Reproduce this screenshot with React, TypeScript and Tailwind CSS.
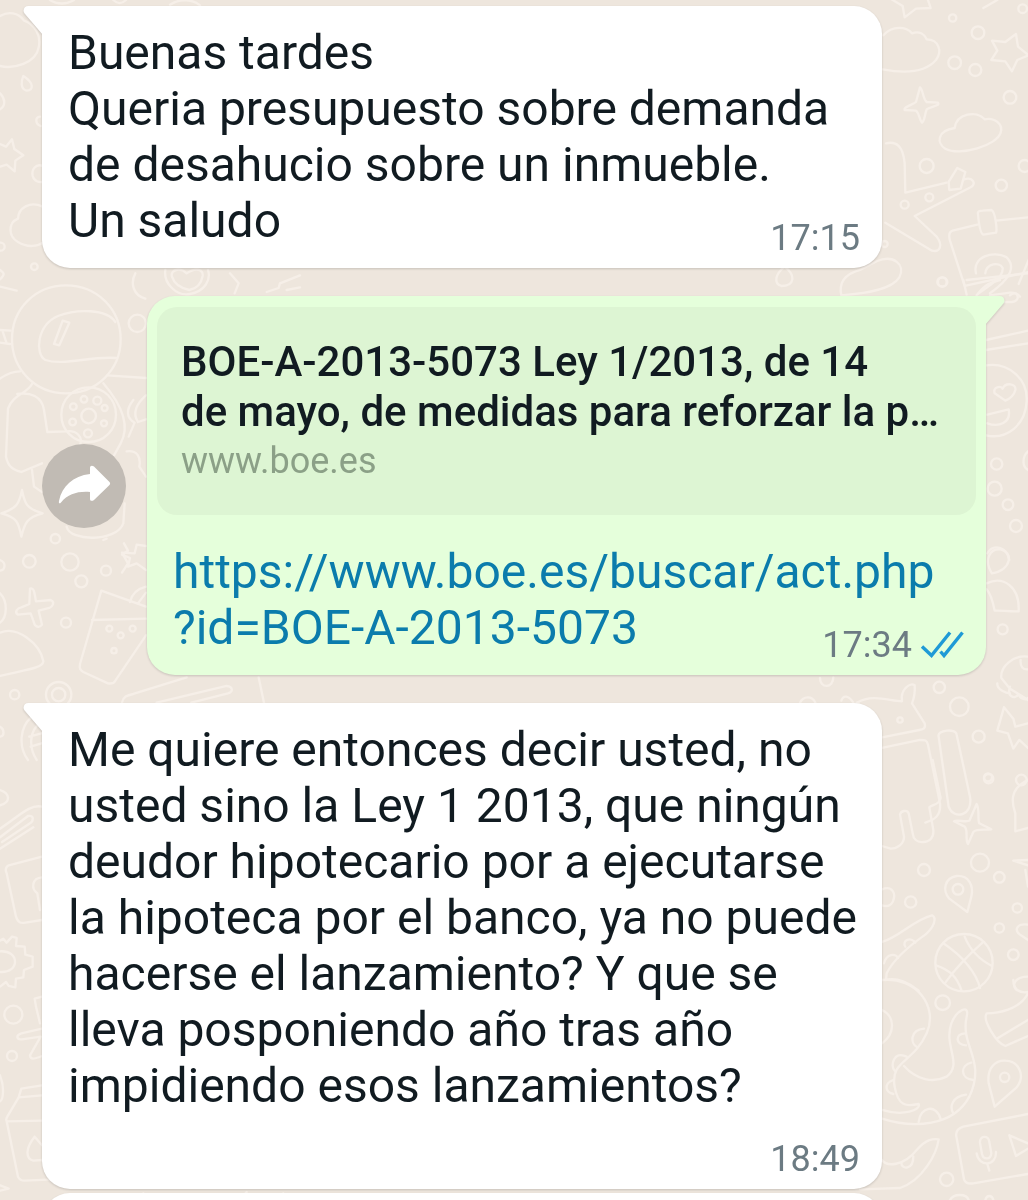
import React from 'react';

interface Dot {
	x: number;
	y: number;
	r: number;
}

interface DoodlePatch {
	x: number;
	y: number;
	paths: string[];
	dots: Dot[];
}

// Line art of the chat wallpaper, grouped in patches drawn at three times their size
const wallpaper: DoodlePatch[] = [
	{
		x: 0,
		y: 0,
		paths: [
			'M0 48C25 33 55 38 72 62C105 72 124 108 116 142C108 190 40 208 0 198',
			'M70 228C62 245 62 268 80 272C100 270 104 250 70 228Z',
			'M0 280C16 296 18 318 0 328',
			'M0 432L18 440L36 418L43 447L70 466L46 482L44 514L20 494L0 500',
			'M128 620C90 602 55 624 54 656C24 668 24 710 54 726C84 745 115 738 128 728',
			'M150 0C170 14 200 14 222 0M340 0C352 12 366 12 378 0M510 14C540 -6 580 -2 600 16',
			'M128 498C108 490 94 508 98 528C102 544 118 548 128 546M120 350C104 352 106 372 122 378',
		],
		dots: [
			{ x: 103, y: 800, r: 10 },
			{ x: 2, y: 740, r: 12 },
		],
	},
	{
		x: 760,
		y: 0,
		paths: [
			'M385 -8L428 18L434 52L468 26L512 24L500 -12M670 24L712 0',
			'M370 106C398 74 440 80 456 100C480 92 494 104 500 118C536 118 548 154 528 180C490 224 420 218 368 208',
			'M696 122L736 126L768 102L774 140L806 166L772 180L756 214L736 184L694 180L712 152Z',
			'M480 262C490 270 488 296 500 306L534 308C542 318 510 320 500 328C494 344 494 364 486 368C478 360 478 340 468 332L434 330C430 320 460 314 468 306Z',
			'M584 384C590 340 650 330 674 358C706 352 730 374 722 398C712 436 600 470 556 446C530 430 530 392 584 384Z',
			'M378 430C410 422 430 440 434 490L436 578L560 548M612 538C640 530 650 552 632 562L464 648L530 710C550 736 540 758 516 752L376 668',
			'M566 546L592 504L616 516L602 566L568 570Z',
			'M652 674L578 692C566 696 566 708 570 722L614 858L806 816M708 662L806 652M654 642C652 634 660 632 668 632L694 630C706 634 712 690 708 698L670 704C660 700 656 666 654 642Z',
			'M648 820C636 770 700 750 740 772C768 800 752 836 690 880M676 820C680 790 718 784 728 804C730 830 700 850 656 880',
			'M244 886C236 850 250 824 300 810L350 784C400 762 438 794 418 832C396 868 320 880 244 886Z',
			'M74 800C46 822 40 850 64 858C104 858 108 826 74 800ZM806 780L776 852M750 886C760 876 774 880 780 890',
		],
		dots: [
			{ x: 578, y: 54, r: 11 },
			{ x: 654, y: 98, r: 19 },
			{ x: 584, y: 188, r: 19 },
			{ x: 646, y: 210, r: 18 },
			{ x: 750, y: 292, r: 19 },
			{ x: 788, y: 26, r: 13 },
			{ x: 500, y: 498, r: 21 },
			{ x: 508, y: 592, r: 12 },
			{ x: 434, y: 614, r: 12 },
			{ x: 724, y: 556, r: 17 },
			{ x: 794, y: 498, r: 18 },
			{ x: 546, y: 846, r: 14 },
			{ x: 374, y: 732, r: 9 },
		],
	},
	{
		x: 0,
		y: 270,
		paths: [
			'M362 208C362 300 290 370 198 370C106 370 36 298 36 208C36 116 106 46 198 46C290 46 362 116 362 208Z',
			'M346 156C320 116 230 116 174 138C110 166 104 252 136 270C190 288 270 258 348 264',
			'M188 152L208 158L178 226L162 222Z',
			'M0 50L50 62M0 28C20 10 8 6 0 0M0 180L32 182M0 218L30 222M8 184L20 220',
			'M0 326C28 306 50 304 60 304M96 342C80 372 40 372 24 416L18 560C24 590 40 600 64 606L126 580M52 372C90 366 126 378 132 420L142 486L200 484C230 480 250 502 240 524',
			'M322 316L438 324M310 340C370 410 390 470 362 520L340 560M400 390C376 420 380 444 404 458L386 500M438 376C410 400 396 430 414 456L438 448',
			'M348 434C348 480 312 516 266 516C220 516 184 480 184 434C184 388 220 352 266 352C312 352 348 388 348 434Z',
			'M380 544C410 540 424 560 418 590L438 620M96 600L102 650L126 666M200 770C210 816 350 816 370 760L374 700',
			'M66 660C74 700 78 716 128 730C80 742 74 760 64 800C56 756 50 742 4 730C50 716 58 700 66 660Z',
			'M406 10C390 40 400 76 436 86M496 0C490 40 530 80 570 72C614 64 634 30 624 0M516 20C510 0 540 -10 560 10C590 -10 610 0 608 18C604 40 590 56 568 60C540 54 522 40 516 20ZM690 10L716 40L704 70M800 66L836 54L840 40L900 16M860 60L900 52',
			'M438 828L410 824L404 850L366 848L384 880L366 908',
		],
		dots: [
			{ x: 266, y: 438, r: 22 },
			{ x: 252, y: 388, r: 10 },
			{ x: 292, y: 392, r: 12 },
			{ x: 220, y: 410, r: 10 },
			{ x: 218, y: 456, r: 10 },
			{ x: 312, y: 460, r: 9 },
			{ x: 314, y: 414, r: 9 },
			{ x: 264, y: 490, r: 12 },
			{ x: 412, y: 160, r: 26 },
			{ x: 166, y: 806, r: 14 },
			{ x: 88, y: 874, r: 19 },
			{ x: 210, y: 876, r: 26 },
		],
	},
	{
		x: 0,
		y: 540,
		paths: [
			'M0 160C24 184 22 232 0 248M0 60C20 68 16 90 0 92',
			'M90 146C104 140 104 166 108 184L152 180C166 186 158 200 148 204L116 212L126 254C118 266 104 260 102 248L92 220L54 224C42 216 52 204 64 202L88 192Z',
			'M0 278C50 256 120 310 130 364C128 386 70 390 0 408',
			'M304 152L438 200M304 152L240 372C238 386 240 390 250 396L324 430C336 432 342 430 346 422L438 286M276 240L438 236M390 186C396 160 414 146 438 140M414 190L438 158',
			'M372 10L384 32L366 44L390 54L384 80L410 70L438 90M310 0L320 -4M366 488C370 470 380 466 400 462L560 412M470 488L680 438C700 440 700 456 684 460L574 488M776 412L792 488',
			'M94 532C60 560 54 620 84 660M120 550C90 570 84 620 110 660M88 590L124 580M92 620L124 610M0 560C14 568 14 588 0 590',
		],
		dots: [
			{ x: 244, y: 124, r: 18 },
			{ x: 318, y: 92, r: 15 },
			{ x: 198, y: 248, r: 15 },
			{ x: 328, y: 266, r: 9 },
			{ x: 398, y: 266, r: 9 },
			{ x: 362, y: 286, r: 9 },
			{ x: 342, y: 332, r: 8 },
			{ x: 44, y: 464, r: 14 },
			{ x: 176, y: 464, r: 38 },
			{ x: 176, y: 464, r: 20 },
		],
	},
	{
		x: 780,
		y: 540,
		paths: [
			'M636 100C610 60 630 24 662 28C700 36 696 90 636 100ZM620 130C670 106 720 140 716 214C690 216 660 210 644 212C638 180 630 160 620 148',
			'M230 488C280 460 330 484 366 484C360 450 390 426 404 436C406 460 400 480 396 490L434 550C438 566 430 568 418 570L306 592',
			'M306 624L420 600C436 600 440 600 444 614L480 790C484 830 460 840 436 848',
			'M476 590C470 570 528 564 530 584L570 770C580 830 520 840 506 800L476 590',
			'M744 350C700 344 660 380 664 414L690 446L744 480M652 430C650 450 680 460 690 460M690 440C680 470 704 480 716 462C720 480 740 480 744 474M722 360C720 380 730 390 744 388',
			'M672 502L652 572L684 580L700 626L718 600L744 624M672 502L700 536L706 560L744 550',
			'M120 414C120 446 160 446 160 412M184 482C190 464 206 466 220 488M60 488C70 468 96 466 106 488',
		],
		dots: [
			{ x: 668, y: 268, r: 15 },
			{ x: 478, y: 442, r: 17 },
			{ x: 538, y: 500, r: 28 },
			{ x: 596, y: 590, r: 18 },
			{ x: 360, y: 540, r: 8 },
			{ x: 624, y: 712, r: 12 },
		],
	},
	{
		x: 860,
		y: 760,
		paths: [
			'M218 0L242 114C240 134 216 134 208 142L220 210C222 236 206 246 190 246C170 248 160 236 158 220L146 160C142 148 122 152 120 164L132 230C132 252 112 266 92 266L66 258',
			'M350 132C360 150 352 180 358 190L394 208C370 210 346 206 340 216L324 252C314 236 326 212 314 200L282 184C290 178 320 188 328 182Z',
			'M322 456L268 416C246 390 254 354 290 348C326 346 342 376 334 410Z',
			'M66 388C96 376 110 400 98 426C90 440 78 440 66 436M66 546C120 530 160 480 216 466C232 474 222 502 196 524C150 556 100 600 80 640L78 660C110 650 150 670 176 692',
			'M136 560C124 540 154 530 166 548M72 610C80 580 106 580 114 594',
			'M398 608C398 656 360 694 312 694C264 694 226 656 226 608C226 560 264 522 312 522C360 522 398 560 398 608Z',
			'M250 550C310 590 350 640 360 684M314 530C330 570 360 600 396 618M228 616C270 630 290 650 304 690M370 546C320 590 276 640 256 668',
			'M504 60C440 90 460 140 466 160L466 214L504 204M504 316L460 302L504 300M496 330L504 380M504 494C470 490 462 510 480 524L504 540M504 650C460 650 456 680 470 690',
		],
		dots: [
			{ x: 386, y: 56, r: 14 },
			{ x: 484, y: 60, r: 16 },
			{ x: 360, y: 308, r: 27 },
			{ x: 192, y: 330, r: 18 },
			{ x: 418, y: 352, r: 16 },
			{ x: 294, y: 388, r: 16 },
			{ x: 152, y: 426, r: 17 },
			{ x: 472, y: 444, r: 14 },
			{ x: 418, y: 504, r: 14 },
			{ x: 460, y: 584, r: 16 },
		],
	},
	{
		x: 860,
		y: 980,
		paths: [
			'M66 0C170 -10 236 80 200 160C160 250 90 240 104 320C114 380 140 380 176 372C184 390 130 410 66 390',
			'M132 258C170 300 220 310 260 290C310 250 250 200 274 130C290 90 330 70 320 110C300 200 380 240 328 350C280 440 160 446 66 416',
			'M66 90C106 110 106 160 66 190M192 146C150 150 150 190 172 202M140 230C100 210 90 260 104 272M316 160C284 160 286 196 318 196M334 248C300 256 300 296 340 300M318 344C276 350 268 380 280 400M242 418C230 370 180 380 176 426M100 300C72 310 74 336 100 342',
			'M504 40C480 90 410 100 380 100C366 120 410 190 436 198L504 168M410 176L504 120M460 0C460 30 480 40 504 36',
			'M404 380L386 310C380 260 410 240 436 242C480 244 496 290 470 322Z',
			'M504 402L310 440C290 446 286 460 290 474L312 598C316 610 326 612 340 610L504 582',
			'M360 488C358 466 386 464 388 486L394 520C392 540 370 540 366 522ZM350 520C356 562 410 560 408 516M382 552L388 572M448 466L504 490M448 466L468 528L504 506',
			'M66 540C80 560 130 560 170 510C200 476 220 476 236 478C230 520 190 600 120 624L0 628M124 548C124 570 160 570 160 530M270 660C280 640 320 640 326 660M376 660C380 644 396 644 400 660',
		],
		dots: [
			{ x: 248, y: 68, r: 22 },
			{ x: 434, y: 292, r: 14 },
			{ x: 260, y: 598, r: 20 },
		],
	},
	{
		x: 0,
		y: 1060,
		paths: [
			'M0 46C14 80 10 120 0 124M126 76L64 86L56 112L126 106M56 112L22 170C18 176 18 180 20 184L54 350C58 358 66 362 74 362L160 358M20 184L126 182M104 230C76 264 76 296 100 302L126 300M104 230L126 256M0 376L26 386L0 392M720 420L740 396M410 420L430 400L450 420M840 420L850 400',
		],
		dots: [],
	},
	{
		x: 0,
		y: 740,
		paths: [
			'M0 266C60 226 90 192 126 200M0 292L84 228C104 224 100 244 90 250L6 306M0 326L100 262M0 150C30 160 34 186 0 196',
			'M126 350L26 376C16 382 16 392 20 400L48 530C54 548 62 550 76 548L126 540M126 412C96 414 92 446 112 460L120 510',
			'M0 602L10 596L20 608L36 590L50 594L48 618L74 620L76 644L98 650L98 680L72 690L70 712L48 716L46 742L26 738L18 726L0 740M0 634C60 630 60 700 0 696',
			'M126 770L104 776L108 800L120 850M126 866L64 880C46 886 50 900 66 898L122 890L90 946C92 960 100 958 126 948',
		],
		dots: [
			{ x: 40, y: 824, r: 27 },
			{ x: 36, y: 948, r: 15 },
		],
	},
	{
		x: 900,
		y: 280,
		paths: [
			'M190 0L200 44M200 0L384 -20M270 46L330 38C360 36 360 64 336 66L310 66M230 46C250 20 260 10 300 0M258 180L384 152M258 210L384 190',
			'M258 256C330 246 384 300 380 364C376 436 320 480 258 466',
			'M316 362L284 340C278 322 300 316 308 326C316 306 350 310 346 330C342 346 330 356 316 362ZM262 404L326 388C334 430 296 442 262 430M384 514C366 530 366 560 384 570',
			'M262 820C280 790 320 800 328 840',
		],
		dots: [
			{ x: 128, y: 6, r: 14 },
			{ x: 290, y: 552, r: 17 },
			{ x: 284, y: 626, r: 21 },
			{ x: 324, y: 674, r: 16 },
			{ x: 348, y: 738, r: 18 },
		],
	},
];

const Wallpaper: React.FC = () => (
	<svg
		aria-hidden="true"
		viewBox="0 0 1028 1200"
		preserveAspectRatio="xMidYMid slice"
		className="absolute inset-0 h-full w-full">
		{wallpaper.map((patch, i) => (
			<g
				key={i}
				transform={`translate(${patch.x} ${patch.y}) scale(0.3333)`}
				fill="none"
				stroke="#f6efe8"
				strokeWidth="7"
				strokeLinecap="round"
				strokeLinejoin="round">
				{patch.paths.map((d) => (
					<path key={d} d={d} />
				))}
				{patch.dots.map((dot) => (
					<circle key={`${dot.x}-${dot.y}-${dot.r}`} cx={dot.x} cy={dot.y} r={dot.r} />
				))}
			</g>
		))}
	</svg>
);

const Tail: React.FC<{ side: 'left' | 'right' }> = ({ side }) => (
	<svg
		aria-hidden="true"
		viewBox="0 0 20 30"
		className={
			side === 'left'
				? 'absolute top-0 -left-[19px] h-[30px] w-5 fill-white'
				: 'absolute top-0 -right-[19px] h-[30px] w-5 -scale-x-100 fill-[#e5ffdb]'
		}>
		<path d="M20 0H5.500C1 0 -1 4.500 2 8L20 29Z" />
	</svg>
);

const DoubleCheck: React.FC = () => (
	<svg
		role="img"
		aria-label="Leído"
		viewBox="0 0 44 28"
		className="h-7 w-11 fill-none stroke-[#1f9ad6] stroke-[3.4]">
		<path d="M2 15.500L11.500 24.500L30 1.500M20.500 20.500L24 24.500L42.500 1.500" />
	</svg>
);

interface BubbleProps {
	side: 'left' | 'right';
	time: string;
	preview?: React.ReactNode;
	children: React.ReactNode;
}

const Bubble: React.FC<BubbleProps> = ({ side, time, preview, children }) => (
	<article
		className={
			side === 'left'
				? 'relative mr-[104px] rounded-[28px] rounded-tl-none bg-white drop-shadow-[0_1px_1px_rgba(0,0,0,0.16)]'
				: 'relative min-w-0 flex-1 rounded-[28px] rounded-tr-none bg-[#e5ffdb] drop-shadow-[0_1px_1px_rgba(0,0,0,0.16)]'
		}>
		<Tail side={side} />
		{preview}
		<div className="flow-root pt-[19px] pr-[22px] pb-[9px] pl-[26px] text-[48px] leading-[56px]">
			{children}
			{/* drops below the text when the last line leaves no room */}
			<div className="float-right mt-6 flex items-center gap-2 pl-10 text-[36px] leading-[42px] text-[#6c7b83]">
				<time>{time}</time>
				{side === 'right' && <DoubleCheck />}
			</div>
		</div>
	</article>
);

const LinkPreview: React.FC = () => (
	<div className="px-[10px] pt-[11px] pb-[10px]">
		<div className="rounded-[20px] bg-[#ddf5d3] px-6 pt-[30px] pb-[30px]">
			<h2 className="text-[42px] leading-[50px] font-medium">
				BOE-A-2013-5073 Ley 1/2013, de 14
				<br />
				de mayo, de medidas para reforzar la p…
			</h2>
			<p className="text-[36px] leading-[48px] text-[#8ba087]">www.boe.es</p>
		</div>
	</div>
);

const App: React.FC = () => {
	return (
		<main className="relative h-screen overflow-hidden bg-[#eee6dd] font-['Roboto',sans-serif] text-[#111b21]">
			<Wallpaper />
			<div className="relative px-[42px] pt-[6px]">
				<Bubble side="left" time="17:15">
					Buenas tardes
					<br />
					Queria presupuesto sobre demanda de desahucio sobre un inmueble.
					<br />
					Un saludo
				</Bubble>

				<div className="my-7 flex items-center gap-[21px]">
					<button
						type="button"
						aria-label="Reenviar"
						className="size-[84px] shrink-0 rounded-full bg-[#c1bbb4]">
						<svg viewBox="0 0 84 84" className="size-full fill-white">
							<path d="M48 30V24C48 21.500 50 21 52 22.500L67 37.500C68.500 39 68.500 40 67 41.500L52 56C50 57.500 48 57 48 55V48C36 47 26 50 19 58.500C17.500 60 16.500 59.500 17 57C20 42 31 32 48 30Z" />
						</svg>
					</button>
					<Bubble side="right" time="17:34" preview={<LinkPreview />}>
						<a href="https://www.boe.es/buscar/act.php?id=BOE-A-2013-5073" className="text-[#0b7cac]">
							https://www.boe.es/buscar/act.php
							<wbr />
							<span className="whitespace-nowrap">?id=BOE-A-2013-5073</span>
						</a>
					</Bubble>
				</div>

				<Bubble side="left" time="18:49">
					Me quiere entonces decir usted, no usted sino la Ley 1 2013, que ningún
					deudor hipotecario por a ejecutarse la hipoteca por el banco, ya no puede
					hacerse el lanzamiento? Y que se lleva posponiendo año tras año
					impidiendo esos lanzamientos?
				</Bubble>

				{/* next message, cut off by the bottom of the window */}
				<article className="mt-1 mr-[104px] h-28 rounded-[28px] bg-white drop-shadow-[0_1px_1px_rgba(0,0,0,0.16)]" />
			</div>
		</main>
	);
};

export default App;
